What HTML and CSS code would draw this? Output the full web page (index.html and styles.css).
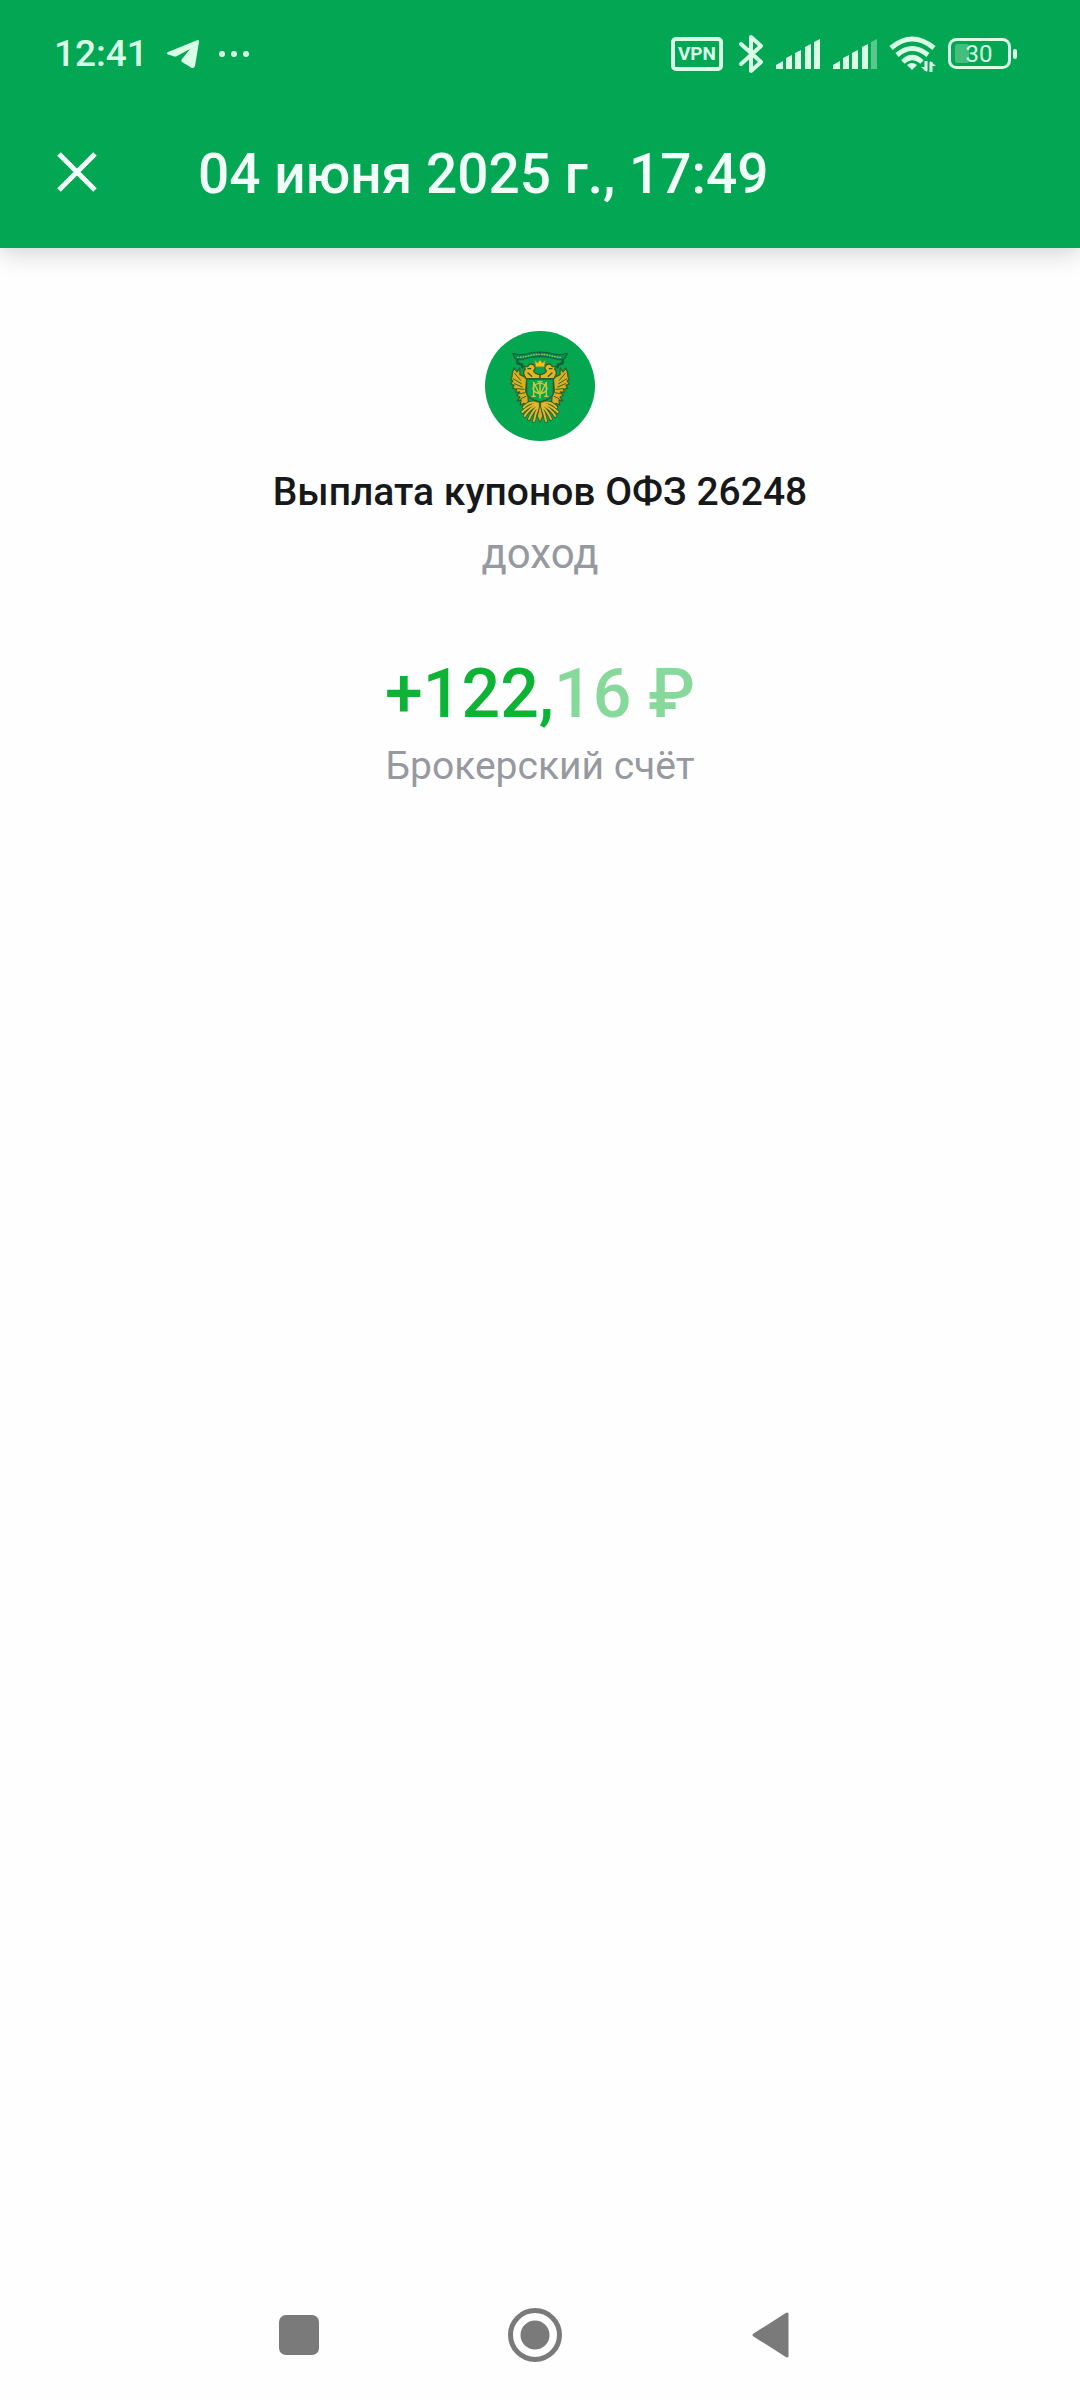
FILE: index.html
```html
<!DOCTYPE html>
<html lang="ru">
<head>
  <meta charset="UTF-8">
  <meta name="viewport" content="width=device-width, initial-scale=1.0">
  <title>Выплата купонов</title>
  <link rel="stylesheet" href="styles.css">
</head>
<body>

  <header class="header">
    <div class="status-bar">
      <div class="status-left">
        <span class="clock">12:41</span>
        <svg width="34" height="30" viewBox="0 0 34 30" fill="#d9ffe6"><path d="M2 13 L31 1.2 Q33.4 .4 33 3 L29 27 Q28 30 25 28.500 L16 23 Q14.500 21.500 16 20 L24 10 L11 17 Q9 18 7 17 L2 15.500 Q0 14.500 2 13Z"/></svg>
        <svg width="32" height="8" viewBox="0 0 32 8" fill="#d9ffe6"><circle cx="4" cy="4" r="3"/><circle cx="16" cy="4" r="3"/><circle cx="28" cy="4" r="3"/></svg>
      </div>
      <div class="status-right">
        <span class="vpn">VPN</span>
        <svg width="26" height="40" viewBox="0 0 26 40" fill="none" stroke="#d9ffe6" stroke-width="4" stroke-linejoin="round" stroke-linecap="round"><path d="M3 10 L23 28 L13 37 V3 L23 12 L3 30"/></svg>
        <svg width="46" height="30" viewBox="0 0 46 30" fill="#d9ffe6"><path d="M1 30V26L8 22V30ZM11 30V19L17 16V30ZM20 30V14L26 11V30ZM30 30V8L36 5V30ZM39 30V3L45 0V30Z"/></svg>
        <svg width="46" height="30" viewBox="0 0 46 30" fill="#d9ffe6"><path d="M1 30V26L8 22V30ZM11 30V19L17 16V30ZM20 30V14L26 11V30ZM30 30V8L36 5V30Z"/><path opacity=".4" d="M39 30V3L45 0V30Z"/></svg>
        <svg width="48" height="36" viewBox="0 0 48 36" fill="none" stroke="#d9ffe6" stroke-width="5"><path d="M2 12 Q23 -6 45 12"/><path d="M8 19 Q23 6 39 19"/><path d="M14 26 Q23 17 33 26"/><path d="M18 29 Q23 25 28 29 L23 34Z" fill="#d9ffe6" stroke="none"/><path d="M37 25V35M42 26V36" stroke-width="3"/><path d="M32 31H38V36ZM47 30H41V25Z" fill="#d9ffe6" stroke="none"/></svg>
        <svg width="70" height="32" viewBox="0 0 70 32"><rect x="1.500" y="1.500" width="60" height="28" rx="7" fill="none" stroke="#d9ffe6" stroke-width="3"/><rect x="7" y="6" width="14" height="19" rx="2" fill="#45bd7c"/><rect x="65" y="11" width="4" height="10" rx="2" fill="#d9ffe6"/><text x="31" y="24" class="battery-text">30</text></svg>
      </div>
    </div>
    <div class="toolbar">
      <button class="close" type="button" aria-label="Закрыть">
        <svg width="40" height="40" viewBox="0 0 40 40" stroke="#f2fff8" stroke-width="5"><path d="M2 2L38 38M38 2L2 38"/></svg>
      </button>
      <h1 class="title">04 июня 2025 г., 17:49</h1>
    </div>
  </header>

  <main class="content">
    <svg class="logo" width="110" height="110" viewBox="0 0 330 330">
      <circle cx="165" cy="165" r="165" fill="#05a650"/>
      <g transform="translate(62 45)" stroke-linejoin="round" stroke-linecap="round">
        <!-- left half of the eagle, mirrored below -->
        <g id="half">
          <path d="M22 22Q40 30 60 24Q80 18 103 18V32Q75 32 47 41Q32 43 28 38Z" fill="#078c50" stroke="#145c3a" stroke-width="3"/>
          <path d="M36 42Q30 52 43 54Q52 55 50 64" fill="none" stroke="#145c3a" stroke-width="8"/>
          <path d="M57 93L43 86L42 66L34 78L26 66L20 80L19 92L15 99L21 105L16 114L25 118L21 127L32 130L31 139L42 138L34 149L43 153L35 165L46 162L44 177L55 172L61 184L68 167L67 150L60 135L63 98Z" fill="#dcae20" stroke="#34602a" stroke-width="4"/>
          <path d="M58 92Q49 79 59 70L55 62L66 62Q72 50 83 56Q94 64 84 75Q88 84 103 86V98H61Z" fill="#e3b51e" stroke="#34602a" stroke-width="4"/>
          <path d="M27 82L45 103M22 98L47 113M26 113L50 123M33 128L55 130M42 143L59 140M46 158L61 151" fill="none" stroke="#2c6b2c" stroke-width="3"/>
          <path d="M67 68H75M67 81L78 91" stroke="#33591f" stroke-width="4"/>
          <path d="M97 172Q74 176 50 198M97 176Q72 186 57 210M99 179Q80 194 70 219M101 179Q88 202 85 225M90 170Q70 166 54 184" fill="none" stroke="#34602a" stroke-width="11"/>
          <path d="M97 172Q74 176 50 198M97 176Q72 186 57 210M99 179Q80 194 70 219M101 179Q88 202 85 225M90 170Q70 166 54 184" fill="none" stroke="#e3b82a" stroke-width="6"/>
        </g>
        <use href="#half" transform="translate(206 0) scale(-1 1)"/>
        <path d="M36 34Q56 34 75 28Q103 22 131 28Q150 34 170 34" fill="none" stroke="#91c65b" stroke-width="4" stroke-dasharray="2 6"/>
        <path d="M90 62L87 43L96 51L103 41L110 51L119 43L116 62Z" fill="#f6bf22" stroke="#7e8d20" stroke-width="2"/>
        <path d="M63 99H143V142Q140 158 103 168Q66 158 63 142Z" fill="#05a650" stroke="#315d28" stroke-width="4"/>
        <path d="M84 151V109L103 147L122 109V151M79 151H89M117 151H127" fill="none" stroke="#d1c73e" stroke-width="4"/>
        <path d="M103 107V155M97 107H109" stroke="#d5b42d" stroke-width="5"/>
        <ellipse cx="103" cy="127" rx="21" ry="15" fill="none" stroke="#d5c641" stroke-width="4"/>
        <path d="M103 175L95 211L103 229L111 211Z" fill="#dda923" stroke="#34602a" stroke-width="3"/>
      </g>
    </svg>
    <h2 class="name">Выплата купонов ОФЗ 26248</h2>
    <p class="kind">доход</p>
    <p class="amount">+122,<span class="kopecks">16 ₽</span></p>
    <p class="account">Брокерский счёт</p>
  </main>

  <nav class="nav-bar">
    <button type="button" aria-label="Недавние"><svg width="54" height="54" viewBox="0 0 54 54" fill="#7a7a7a"><rect x="7" y="7" width="40" height="40" rx="7"/></svg></button>
    <button type="button" aria-label="Домой"><svg width="54" height="54" viewBox="0 0 54 54" fill="#7a7a7a"><circle cx="27" cy="27" r="24.500" fill="none" stroke="#7a7a7a" stroke-width="5"/><circle cx="27" cy="27" r="14.500"/></svg></button>
    <button type="button" aria-label="Назад"><svg width="54" height="54" viewBox="0 0 54 54" fill="#7a7a7a" stroke="#7a7a7a" stroke-width="3" stroke-linejoin="round"><path d="M10 27L43 6V48Z"/></svg></button>
  </nav>

</body>
</html>
```
FILE: styles.css
```css
* {
  box-sizing: border-box;
}

body {
  margin: 0;
  min-height: 100vh;
  display: flex;
  flex-direction: column;
  font-family: Roboto, sans-serif;
  background-color: #fefefe;
  color: #17181a;
}

h1, h2, p {
  margin: 0;
}

button {
  display: flex;
  padding: 0;
  border: none;
  background: none;
  cursor: pointer;
}

.header {
  background-color: #02a653;
  box-shadow: 0 4px 24px rgba(20, 20, 40, 0.2);
}

.status-bar {
  display: flex;
  justify-content: space-between;
  align-items: center;
  height: 108px;
  padding: 0 62px 0 54px;
  color: #d9ffe6;
}

.status-left, .status-right {
  display: flex;
  align-items: center;
  gap: 11px;
}

.status-left {
  gap: 18px;
}

.clock {
  font-size: 37px;
  font-weight: 500;
  line-height: 44px;
}

.vpn {
  margin-right: 4px;
  padding: 0 3px;
  border: 4px solid #d9ffe6;
  border-radius: 5px;
  font-size: 19px;
  font-weight: 700;
  line-height: 26px;
}

.battery-text {
  font-size: 24px;
  text-anchor: middle;
  fill: #d9ffe6;
}

.toolbar {
  display: flex;
  align-items: center;
  gap: 101px;
  height: 140px;
  padding: 0 57px 12px;
}

.title {
  padding-top: 4px;
  font-size: 55px;
  font-weight: 500;
  line-height: 64px;
  color: #f2fff8;
}

.content {
  flex: 1;
  display: flex;
  flex-direction: column;
  align-items: center;
  padding-top: 83px;
  text-align: center;
}

.name {
  margin-top: 27px;
  font-size: 39px;
  font-weight: 500;
  line-height: 48px;
}

.kind, .account {
  color: #9699a0;
  line-height: 48px;
}

.kind {
  margin-top: 14px;
  font-size: 42px;
}

.amount {
  margin-top: 76px;
  font-size: 68px;
  font-weight: 500;
  line-height: 80px;
  color: #0db334;
}

.kopecks {
  color: #86d99a;
}

.account {
  margin-top: 8px;
  font-size: 39px;
}

.nav-bar {
  display: flex;
  justify-content: center;
  gap: 182px;
  padding: 38px 10px 38px 0;
}
```
